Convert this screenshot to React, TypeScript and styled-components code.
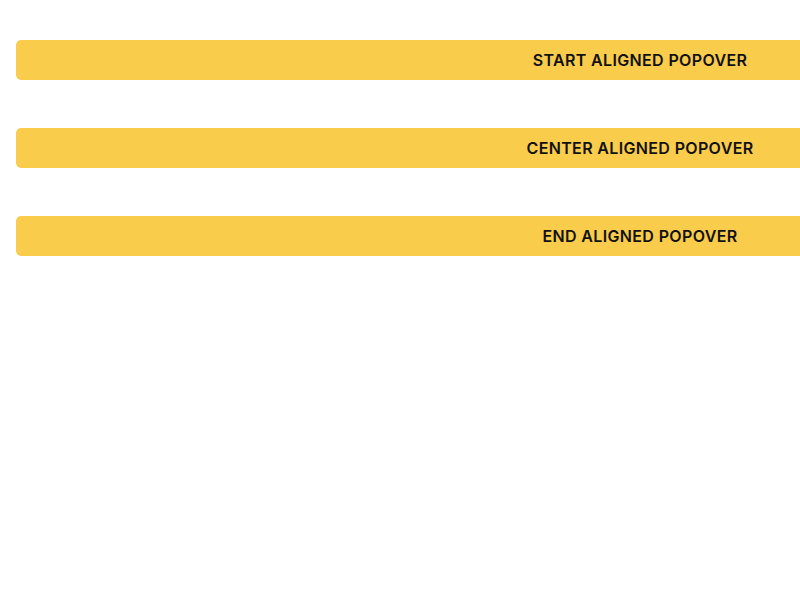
import React from "react";
import styled, { createGlobalStyle } from "styled-components";

const Global = createGlobalStyle`
  html, body { margin: 0; padding: 0; background: #ffffff; overflow: hidden; }
  body { font-family: Inter, "Noto Sans", sans-serif; }
`;

const Page = styled.div`
  display: flex;
  flex-direction: column;
  gap: 48px;
  padding: 40px 16px;
  width: 1280px;
  box-sizing: border-box;
`;

const Button = styled.button`
  display: flex;
  align-items: center;
  justify-content: center;
  width: 100%;
  height: 40px;
  border: none;
  border-radius: 5px;
  background: #facc4b;
  color: #111111;
  font-family: Inter, "Noto Sans", sans-serif;
  font-size: 16px;
  font-weight: 600;
  letter-spacing: 0.35px;
  text-transform: uppercase;
  padding: 0;
  cursor: pointer;
`;

const labels = ["Start aligned popover", "Center aligned popover", "End aligned popover"];

export default function App() {
  return (
    <>
      <Global />
      <Page>
        {labels.map((l) => (
          <Button key={l}>{l}</Button>
        ))}
      </Page>
    </>
  );
}
